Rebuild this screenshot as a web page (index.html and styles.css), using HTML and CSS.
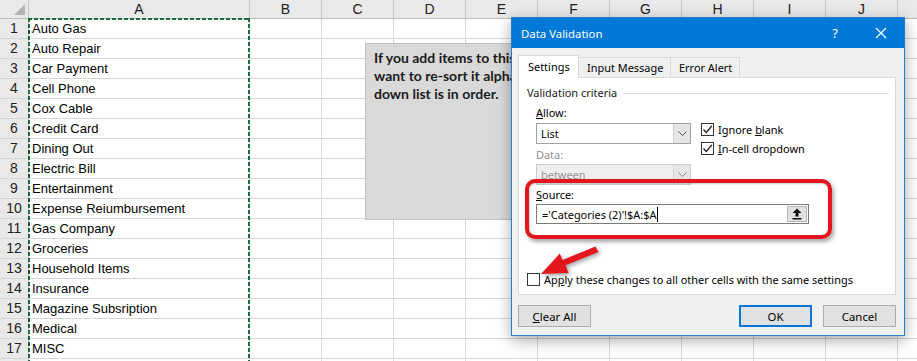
FILE: index.html
```html
<!DOCTYPE html>
<html>
<head>
<meta charset="utf-8">
<title>Data Validation</title>
<link rel="stylesheet" href="styles.css">
</head>
<body>
<div class="sheet">
  <div class="hrow">
    <div class="corner"><span class="tri"></span></div>
    <div class="ch cha">A</div>
    <div class="ch">B</div>
    <div class="ch">C</div>
    <div class="ch">D</div>
    <div class="ch">E</div>
    <div class="ch">F</div>
    <div class="ch">G</div>
    <div class="ch">H</div>
    <div class="ch">I</div>
    <div class="ch">J</div>
    <div class="ch last"></div>
  </div>
  <div class="row"><div class="rh">1</div><div class="ca">Auto Gas</div><div class="rest"></div></div>
  <div class="row"><div class="rh">2</div><div class="ca">Auto Repair</div><div class="rest"></div></div>
  <div class="row"><div class="rh">3</div><div class="ca">Car Payment</div><div class="rest"></div></div>
  <div class="row"><div class="rh">4</div><div class="ca">Cell Phone</div><div class="rest"></div></div>
  <div class="row"><div class="rh">5</div><div class="ca">Cox Cable</div><div class="rest"></div></div>
  <div class="row"><div class="rh">6</div><div class="ca">Credit Card</div><div class="rest"></div></div>
  <div class="row"><div class="rh">7</div><div class="ca">Dining Out</div><div class="rest"></div></div>
  <div class="row"><div class="rh">8</div><div class="ca">Electric Bill</div><div class="rest"></div></div>
  <div class="row"><div class="rh">9</div><div class="ca">Entertainment</div><div class="rest"></div></div>
  <div class="row"><div class="rh">10</div><div class="ca">Expense Reiumbursement</div><div class="rest"></div></div>
  <div class="row"><div class="rh">11</div><div class="ca">Gas Company</div><div class="rest"></div></div>
  <div class="row"><div class="rh">12</div><div class="ca">Groceries</div><div class="rest"></div></div>
  <div class="row"><div class="rh">13</div><div class="ca">Household Items</div><div class="rest"></div></div>
  <div class="row"><div class="rh">14</div><div class="ca">Insurance</div><div class="rest"></div></div>
  <div class="row"><div class="rh">15</div><div class="ca">Magazine Subsription</div><div class="rest"></div></div>
  <div class="row"><div class="rh">16</div><div class="ca">Medical</div><div class="rest"></div></div>
  <div class="row"><div class="rh">17</div><div class="ca">MISC</div><div class="rest"></div></div>
  <div class="row"><div class="rh"></div><div class="ca"></div><div class="rest"></div></div>
</div>

<div class="marquee"></div>

<div class="note">If you add items to this list, you will<br>want to re-sort it alphabetically so the drop<br>down list is in order.</div>

<div class="dialog">
  <div class="title">
    <span class="ttext">Data Validation</span>
    <span class="tbtn help">?</span>
    <span class="tbtn close"><svg width="12" height="12" viewBox="0 0 12 12"><path d="M1 1L11 11M11 1L1 11" stroke="#fff" stroke-width="1.2" fill="none"/></svg></span>
  </div>
  <div class="dbody">
    <div class="tabs">
      <div class="tab sel">Settings</div>
      <div class="tab t2">Input Message</div>
      <div class="tab t3">Error Alert</div>
    </div>
    <div class="panel">
      <div class="legend">Validation criteria</div>
      <div class="crit">
        <div class="cols">
          <div class="lcol">
            <div class="lbl"><u>A</u>llow:</div>
            <div class="sel-box">
              <span class="sv">List</span>
              <span class="dd"><svg width="9" height="6" viewBox="0 0 9 6"><polyline points="0.5,0.5 4.5,4.5 8.5,0.5" stroke="#555" fill="none"/></svg></span>
            </div>
            <div class="lbl dis">Data:</div>
            <div class="sel-box disabled">
              <span class="sv">between</span>
              <span class="dd"><svg width="9" height="6" viewBox="0 0 9 6"><polyline points="0.5,0.5 4.5,4.5 8.5,0.5" stroke="#8a8a8a" fill="none"/></svg></span>
            </div>
          </div>
          <div class="rcol">
            <div class="chk"><span class="cb"><svg width="11" height="11" viewBox="0 0 11 11"><polyline points="1.5,5.5 4.3,8.5 9.8,2" stroke="#222" stroke-width="1.3" fill="none"/></svg></span><span>Ignore <u>b</u>lank</span></div>
            <div class="chk"><span class="cb"><svg width="11" height="11" viewBox="0 0 11 11"><polyline points="1.5,5.5 4.3,8.5 9.8,2" stroke="#222" stroke-width="1.3" fill="none"/></svg></span><span><u>I</u>n-cell dropdown</span></div>
          </div>
        </div>
        <div class="lbl src"><u>S</u>ource:</div>
        <div class="src-box">
          <span class="sv">='Categories (2)'!$A:$A</span><span class="caret"></span>
          <span class="ref"><svg width="10" height="12" viewBox="0 0 10 12"><polygon points="5,0.5 9.5,5 6.5,5 6.5,8.5 3.5,8.5 3.5,5 0.5,5" fill="#111"/><rect x="0.5" y="10" width="9" height="1.5" fill="#111"/></svg></span>
        </div>
      </div>
      <div class="chk apply"><span class="cb"></span><span>Ap<u>p</u>ly these changes to all other cells with the same settings</span></div>
    </div>
    <div class="btns">
      <div class="btn"><u>C</u>lear All</div>
      <div class="btn ok">OK</div>
      <div class="btn">Cancel</div>
    </div>
  </div>
</div>

<div class="callout"></div>
<svg class="arrow" width="76" height="42" viewBox="0 0 76 42">
  <polygon points="70.5,11 37.5,24.3 40.6,31.9 13,33 31.8,12.5 34.5,19.1 67.5,5.6" fill="#e3161d"/>
</svg>
</body>
</html>
```

FILE: styles.css
```css
* { box-sizing: border-box; }
html, body { margin: 0; height: 100%; overflow: hidden; background: #fff; }
body { position: relative; font-family: "Liberation Sans", Arial, sans-serif; color: #000; }

/* spreadsheet grid */
.sheet { display: flex; flex-direction: column; }
.hrow { display: flex; height: 19px; background: #e9e9e9; border-bottom: 1px solid #bcbcbc; flex: none; }
.corner { width: 29px; flex: none; border-right: 1px solid #c6c6c6; position: relative; }
.tri { position: absolute; right: 3px; bottom: 3px; width: 0; height: 0; border-left: 11px solid transparent; border-bottom: 11px solid #b4b4b4; }
.ch { width: 72px; flex: none; border-right: 1px solid #c6c6c6; text-align: center; font-size: 14px; line-height: 18px; color: #222; }
.cha { width: 221px; }
.ch.last { flex: 1; border-right: 0; }
.row { display: flex; height: 20px; flex: none; border-bottom: 1px solid #d6d6d6; }
.rh { width: 29px; flex: none; background: #e9e9e9; border-right: 1px solid #bcbcbc; text-align: center; font-size: 14px; line-height: 19px; color: #222; }
.ca { width: 221px; flex: none; border-right: 1px solid #d6d6d6; font-size: 13px; line-height: 19px; padding-left: 3px; white-space: nowrap; }
.rest { flex: 1; background: repeating-linear-gradient(to right, transparent 0 71px, #d6d6d6 71px 72px); }

/* copy marquee around column A */
.marquee {
  position: absolute; left: 28px; top: 18px; width: 222px; height: 360px;
  background:
    repeating-linear-gradient(to bottom, #1f6b3d 0 4px, transparent 4px 6px) left top / 2px 100% no-repeat,
    repeating-linear-gradient(to bottom, #1f6b3d 0 4px, transparent 4px 6px) right top / 2px 100% no-repeat,
    repeating-linear-gradient(to right, #1f6b3d 0 4px, transparent 4px 6px) left top / 100% 2px no-repeat;
}

/* text box shape */
.note {
  position: absolute; left: 365px; top: 43px; width: 320px; height: 177px;
  background: #d9d9d9; border: 1px solid #c3c3c3;
  font-family: Lato, "Liberation Sans", sans-serif; font-weight: 700; font-size: 14px; line-height: 18px;
  color: #1c1c1c; padding: 5px 8px; white-space: nowrap;
}

/* dialog */
.dialog {
  position: absolute; left: 511px; top: 17px; width: 394px; height: 319px;
  border: 1px solid #2a7bd0; background: #f0f0f0;
  box-shadow: 0 4px 14px rgba(0,0,0,0.35);
  font-family: "Noto Sans", "Open Sans", sans-serif; font-size: 10.95px; color: #000;
}
.title { height: 30px; background: #0078d7; color: #fff; display: flex; align-items: center; padding-left: 9px; font-size: 11.4px; }
.ttext { flex: 1; }
.tbtn { width: 46px; height: 30px; display: flex; align-items: center; justify-content: center; }
.help { font-size: 13px; }
.dbody { padding: 7px 8px 0 6px; }
.tabs { display: flex; align-items: flex-end; height: 22px; }
.tab { height: 20px; border: 1px solid #d9d9d9; border-bottom: 0; border-left: 0; background: #f0f0f0; line-height: 16px; padding-top: 2px; white-space: nowrap; }
.tab.sel { height: 23px; width: 61px; background: #fff; position: relative; z-index: 1; margin-bottom: -1px; border-left: 1px solid #d9d9d9; padding: 3px 0 0 9px; }
.tab.t2 { width: 92px; padding-left: 8px; }
.tab.t3 { width: 69px; padding-left: 8px; }
.panel { height: 218px; background: #fff; border: 1px solid #d9d9d9; margin-right: 0; }
.legend { display: flex; align-items: center; padding: 7px 6px 0 8px; line-height: 16px; color: #1a1a1a; }
.legend::after { content: ""; flex: 1; height: 1px; background: #dcdcdc; margin-left: 6px; }
.crit { padding-left: 17px; }
.cols { display: flex; gap: 10px; }
.lcol { width: 155px; flex: none; }
.lbl { height: 18px; line-height: 18px; }
.lcol .lbl:first-child { margin-top: 3px; }
.lbl.dis { color: #8f8f8f; margin-top: 2px; }
.lbl.src { margin-top: 1px; }
.sel-box { height: 21px; margin-top: 1px; border: 1px solid #a3a3a3; background: #fff; display: flex; align-items: center; }
.sel-box .sv { flex: 1; padding-left: 4px; }
.sel-box .dd { width: 17px; height: 100%; background: #e5e5e5; border-left: 1px solid #cfcfcf; display: flex; align-items: center; justify-content: center; }
.sel-box.disabled { margin-top: 0; border-color: #cccccc; background: #efefef; color: #939393; }
.sel-box.disabled .dd { background: #e6e6e6; border-left-color: #d6d6d6; }
.rcol { padding-top: 19px; }
.chk { display: flex; align-items: center; height: 19px; gap: 4px; white-space: nowrap; }
.cb { width: 13px; height: 13px; border: 1px solid #333; background: #fff; display: flex; align-items: center; justify-content: center; flex: none; }
.src-box { width: 273px; height: 20px; border: 1px solid #7a7a7a; background: #fff; display: flex; align-items: center; padding-left: 5px; }
.src-box .sv { white-space: pre; }
.caret { width: 1px; height: 15px; background: #000; margin-left: 1px; }
.ref { margin-left: auto; margin-right: 1px; width: 20px; height: 16px; background: #e1e1e1; border: 1px solid #b5b5b5; display: flex; align-items: center; justify-content: center; }
.apply { margin-top: 46px; padding-left: 8px; }
.btns { display: flex; gap: 11px; margin-top: 10px; }
.btn { width: 73px; height: 22px; border: 1px solid #adadad; background: #e1e1e1; display: flex; align-items: center; justify-content: center; font-size: 11.4px; }
.btn.ok { margin-left: auto; border: 2px solid #0078d7; }

/* annotations */
.callout {
  position: absolute; left: 525px; top: 179px; width: 307px; height: 60px;
  border: 4px solid #e3161d; border-radius: 10px;
  box-shadow: 2px 3px 4px rgba(0,0,0,0.35), inset 1px 1px 2px rgba(0,0,0,0.2);
}
.arrow { position: absolute; left: 528px; top: 241px; filter: drop-shadow(2px 2px 2px rgba(0,0,0,0.35)); }
```
